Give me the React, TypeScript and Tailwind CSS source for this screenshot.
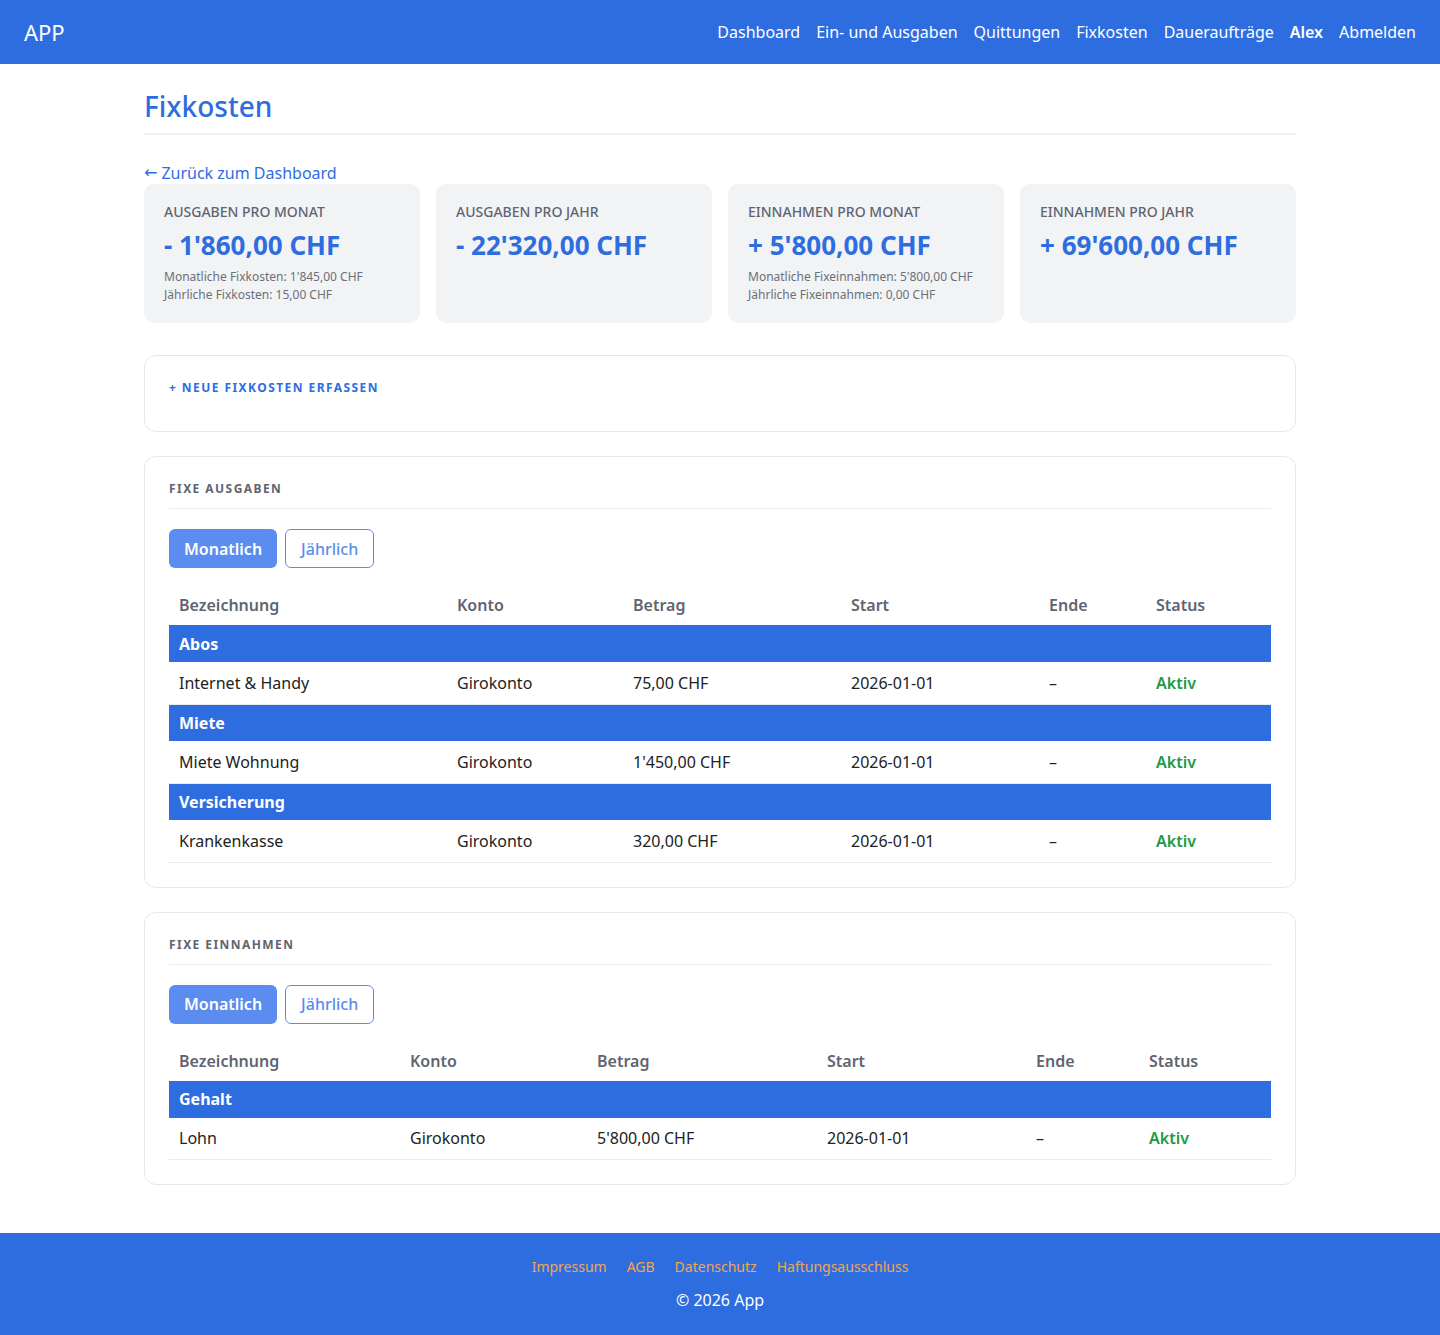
import React from "react";

const BLUE = "bg-[#2e6ddf]";

const navLinks = ["Dashboard", "Ein- und Ausgaben", "Quittungen", "Fixkosten", "Daueraufträge"];

type Stat = { label: string; value: string; lines?: string[] };

const stats: Stat[] = [
  {
    label: "Ausgaben pro Monat",
    value: "- 1'860,00 CHF",
    lines: ["Monatliche Fixkosten: 1'845,00 CHF", "Jährliche Fixkosten: 15,00 CHF"],
  },
  { label: "Ausgaben pro Jahr", value: "- 22'320,00 CHF" },
  {
    label: "Einnahmen pro Monat",
    value: "+ 5'800,00 CHF",
    lines: ["Monatliche Fixeinnahmen: 5'800,00 CHF", "Jährliche Fixeinnahmen: 0,00 CHF"],
  },
  { label: "Einnahmen pro Jahr", value: "+ 69'600,00 CHF" },
];

type Row = { name: string; konto: string; betrag: string; start: string };
type Group = { title: string; rows: Row[] };

const ausgaben: Group[] = [
  { title: "Abos", rows: [{ name: "Internet & Handy", konto: "Girokonto", betrag: "75,00 CHF", start: "2026-01-01" }] },
  { title: "Miete", rows: [{ name: "Miete Wohnung", konto: "Girokonto", betrag: "1'450,00 CHF", start: "2026-01-01" }] },
  { title: "Versicherung", rows: [{ name: "Krankenkasse", konto: "Girokonto", betrag: "320,00 CHF", start: "2026-01-01" }] },
];

const einnahmen: Group[] = [
  { title: "Gehalt", rows: [{ name: "Lohn", konto: "Girokonto", betrag: "5'800,00 CHF", start: "2026-01-01" }] },
];

function StatCard({ s }: { s: Stat }) {
  return (
    <div className="min-h-[139px] rounded-[10px] bg-[#f2f3f5] px-5 pb-[19px] pt-[18px]">
      <div className="text-[14px] font-medium uppercase leading-[20px] text-[#5f6570]">{s.label}</div>
      <div className="mt-[6px] text-[26px] font-bold leading-[34px] text-[#2e6ddf]">{s.value}</div>
      {s.lines && (
        <div className="mt-[6px] text-[12px] leading-[18px] text-[#6b7079]">
          {s.lines.map((l) => (
            <div key={l}>{l}</div>
          ))}
        </div>
      )}
    </div>
  );
}

function FixTable({ title, groups, widths }: { title: string; groups: Group[]; widths: number[] }) {
  const heads = ["Bezeichnung", "Konto", "Betrag", "Start", "Ende", "Status"];
  return (
    <section className="rounded-[12px] border border-[#e5e7eb] bg-white px-6 pb-6 pt-[23px]">
      <h2 className="border-b border-[#eceef1] pb-[10px] text-[12px] font-bold uppercase leading-[18px] tracking-[0.12em] text-[#5f6570]">
        {title}
      </h2>
      <div className="mt-5 flex gap-2">
        <button className="h-[39px] rounded-[6px] bg-[#5a8def] px-[15px] text-[16px] font-semibold text-white">
          Monatlich
        </button>
        <button className="h-[39px] rounded-[6px] border border-[#5a8def] bg-white px-[15px] text-[16px] font-medium text-[#5a8def]">
          Jährlich
        </button>
      </div>
      <table className="mt-[17px] w-full table-fixed border-collapse text-[16px]">
        <colgroup>
          {widths.map((w, i) => (
            <col key={i} style={{ width: w }} />
          ))}
        </colgroup>
        <thead>
          <tr>
            {heads.map((h) => (
              <th key={h} className="h-[40px] px-[10px] text-left font-semibold text-[#5f6570]">
                {h}
              </th>
            ))}
          </tr>
        </thead>
        <tbody>
          {groups.map((g) => (
            <React.Fragment key={g.title}>
              <tr className="bg-[#2e6ddf]">
                <td colSpan={6} className="h-[37px] px-[10px] font-bold text-white">
                  {g.title}
                </td>
              </tr>
              {g.rows.map((r) => (
                <tr key={r.name} className="border-b border-[#e9ebee]">
                  <td className="h-[42px] px-[10px] text-[#222]">{r.name}</td>
                  <td className="px-[10px] text-[#222]">{r.konto}</td>
                  <td className="px-[10px] text-[#222]">{r.betrag}</td>
                  <td className="px-[10px] text-[#222]">{r.start}</td>
                  <td className="px-[10px] text-[#222]">–</td>
                  <td className="px-[10px] font-semibold text-[#1e9a43]">Aktiv</td>
                </tr>
              ))}
            </React.Fragment>
          ))}
        </tbody>
      </table>
    </section>
  );
}

export default function App() {
  return (
    <div className="min-h-screen bg-white font-['Noto_Sans',sans-serif] text-[#222]">
      <header className={`${BLUE} flex h-16 items-center justify-between px-6 text-white`}>
        <a className="text-[22px] leading-none">APP</a>
        <nav className="flex items-center gap-4 text-[16px]">
          {navLinks.map((l) => (
            <a key={l}>{l}</a>
          ))}
          <a className="font-semibold">Alex</a>
          <a>Abmelden</a>
        </nav>
      </header>

      <main className="mx-auto max-w-6xl pb-12 pt-6">
        <h1 className="border-b-2 border-[#eef0f2] pb-[9px] text-[28px] font-medium leading-[36px] text-[#2e6ddf]">
          Fixkosten
        </h1>
        <a className="mt-[27px] flex h-[22px] items-center gap-1 text-[16px] leading-[22px] text-[#2e6ddf]">
          <span className="font-['DejaVu_Sans',sans-serif] leading-none">←</span>
          <span>Zurück zum Dashboard</span>
        </a>
        <div className="grid grid-cols-4 gap-4">
          {stats.map((s) => (
            <StatCard key={s.label} s={s} />
          ))}
        </div>

        <div className="mt-8 rounded-[12px] border border-[#e5e7eb] px-6 pb-[34px] pt-[23px]">
          <div className="text-[12px] font-bold uppercase leading-[18px] tracking-[0.12em] text-[#2e6ddf]">
            + Neue Fixkosten erfassen
          </div>
        </div>

        <div className="mt-6 flex flex-col gap-6">
          <FixTable title="Fixe Ausgaben" groups={ausgaben} widths={[278, 176, 218, 198, 107, 125]} />
          <FixTable title="Fixe Einnahmen" groups={einnahmen} widths={[231, 187, 230, 209, 113, 132]} />
        </div>
      </main>

      <footer className={`${BLUE} flex flex-col items-center pb-6 pt-6 text-white`}>
        <div className="flex gap-5 text-[14px] leading-[20px] text-[#f5a54d]">
          <a>Impressum</a>
          <a>AGB</a>
          <a>Datenschutz</a>
          <a>Haftungsausschluss</a>
        </div>
        <div className="mt-[12px] text-[16px] leading-[22px]">© 2026 App</div>
      </footer>
    </div>
  );
}
